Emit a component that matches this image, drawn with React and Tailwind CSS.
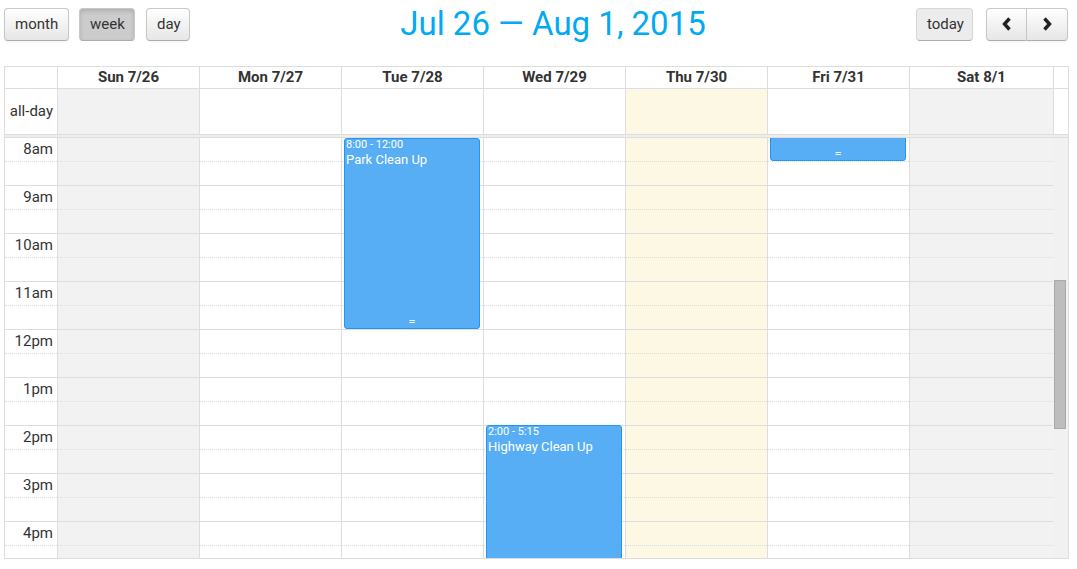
import React from "react";

const days = [
  { label: "Sun 7/26", bg: "bg-[#f2f2f2]" },
  { label: "Mon 7/27", bg: "bg-white" },
  { label: "Tue 7/28", bg: "bg-white" },
  { label: "Wed 7/29", bg: "bg-white" },
  { label: "Thu 7/30", bg: "bg-[#fcf8e3]" },
  { label: "Fri 7/31", bg: "bg-white" },
  { label: "Sat 8/1", bg: "bg-[#f2f2f2]" },
];

const hours = ["8am", "9am", "10am", "11am", "12pm", "1pm", "2pm", "3pm", "4pm"];
const slots = Array.from({ length: 18 }, (_, i) => i);

const events = {
  2: [{ top: 0, height: 191, time: "8:00 - 12:00", title: "Park Clean Up", resizer: true }],
  3: [{ top: 287, height: 260, time: "2:00 - 5:15", title: "Highway Clean Up", resizer: false }],
  5: [{ top: -60, height: 83, time: "", title: "", resizer: true }],
};

const COLS = "grid grid-cols-[53px_repeat(6,142px)_minmax(0,1fr)_15px]";

function Btn({ children, className = "" }) {
  return (
    <button
      className={
        "h-[33px] px-[10px] text-[15px] text-[#333] border border-[#c8c8c8] border-b-[#adadad] rounded-[4px] bg-gradient-to-b from-white to-[#e6e6e6] shadow-[inset_0_1px_0_rgba(255,255,255,0.2),0_1px_2px_rgba(0,0,0,0.05)] " +
        className
      }
    >
      {children}
    </button>
  );
}

function Event({ ev }) {
  return (
    <div
      className="absolute left-[2px] right-[3px] rounded-[3px] border border-[#2196f3] bg-[#58aef5] text-white overflow-hidden"
      style={{ top: ev.top, height: ev.height }}
    >
      {ev.time && (
        <div className="pl-[1px] text-[11px] leading-[12px]">{ev.time}</div>
      )}
      {ev.title && (
        <div className="pl-[1px] text-[13px] leading-[17px]">{ev.title}</div>
      )}
      {ev.resizer && (
        <div className="absolute bottom-[2px] left-0 right-0 text-center text-[10px] leading-[8px] font-['DejaVu_Sans_Mono',monospace]">
          =
        </div>
      )}
    </div>
  );
}

export default function App() {
  return (
    <div className="w-[1077px] h-[569px] bg-white overflow-hidden font-['Roboto','Liberation_Sans',sans-serif] text-[#333]">
      {/* toolbar */}
      <div className="flex items-start pt-[8px] pl-[4px] pr-[9px] h-[66px]">
        <div className="flex gap-[10px]">
          <Btn className="w-[65px]">month</Btn>
          <Btn className="w-[56px] bg-none bg-[#cccccc] border-[#b3b3b3] shadow-[inset_0_2px_4px_rgba(0,0,0,0.15)]">
            week
          </Btn>
          <Btn className="w-[44px] ml-[1px]">day</Btn>
        </div>
        <div className="flex-1 text-center text-[33px] leading-[34px] mt-[-1px] text-[#03a9f4]">
          Jul 26 — Aug 1, 2015
        </div>
        <div className="flex gap-[13px]">
          <Btn className="w-[57px] bg-none bg-[#ececec] text-[#8a8a8a] border-[#d6d6d6] shadow-none">
            today
          </Btn>
          <div className="flex">
            <Btn className="w-[41px] rounded-r-none flex items-center justify-center pb-[2px]">
              <svg width="10" height="14" viewBox="0 0 10 14">
                <polyline points="7.5,1.5 2.5,7 7.5,12.5" fill="none" stroke="#222" strokeWidth="3.4" />
              </svg>
            </Btn>
            <Btn className="w-[41px] rounded-l-none border-l-0 flex items-center justify-center pb-[2px]">
              <svg width="10" height="14" viewBox="0 0 10 14">
                <polyline points="2.5,1.5 7.5,7 2.5,12.5" fill="none" stroke="#222" strokeWidth="3.4" />
              </svg>
            </Btn>
          </div>
        </div>
      </div>

      {/* calendar */}
      <div className="ml-[4px] w-[1065px] border-l border-t border-[#ddd]">
        {/* header */}
        <div className={COLS + " h-[22px]"}>
          <div className="border-r border-b border-[#ddd]" />
          {days.map((d) => (
            <div
              key={d.label}
              className="border-r border-b border-[#ddd] text-center text-[15px] font-bold leading-[21px]"
            >
              {d.label}
            </div>
          ))}
          <div className="border-r border-b border-[#ddd]" />
        </div>
        {/* all-day */}
        <div className={COLS + " h-[45px]"}>
          <div className="border-r border-[#ddd] flex items-center justify-end pr-[4px] text-[15px]">
            all-day
          </div>
          {days.map((d) => (
            <div key={d.label} className={"border-r border-[#ddd] " + d.bg} />
          ))}
          <div className="border-r border-[#ddd]" />
        </div>
        {/* divider */}
        <div className="h-[4px] bg-[#eeeeee] border-y border-r border-[#ddd]" />
        {/* time grid */}
        <div className={COLS + " h-[421px] overflow-hidden border-b border-r border-[#ddd]"}>
          <div className="flex flex-col border-r border-[#ddd]">
            {slots.map((i) => (
              <div
                key={i}
                className={
                  "h-[24px] shrink-0 border-b border-[#ddd] text-right pr-[4px] text-[15px] leading-[22px] " +
                  (i % 2 === 0 ? "border-dotted" : "border-solid")
                }
              >
                {i % 2 === 0 ? hours[i / 2] : ""}
              </div>
            ))}
          </div>
          {days.map((d, di) => (
            <div key={d.label} className={"relative flex flex-col " + (di < 6 ? "border-r border-[#ddd] " : "") + d.bg}>
              {slots.map((i) => (
                <div
                  key={i}
                  className={
                    "h-[24px] shrink-0 border-b border-[#ddd] " +
                    (i % 2 === 0 ? "border-dotted" : "border-solid")
                  }
                />
              ))}
              {(events[di] || []).map((ev, k) => (
                <Event key={k} ev={ev} />
              ))}
            </div>
          ))}
          <div className="relative bg-[#f1f1f1]">
            <div className="absolute left-[1px] top-[142px] w-[12px] h-[149px] bg-[#bdbdbd] border border-[#a9a9a9]" />
          </div>
        </div>
      </div>
    </div>
  );
}
